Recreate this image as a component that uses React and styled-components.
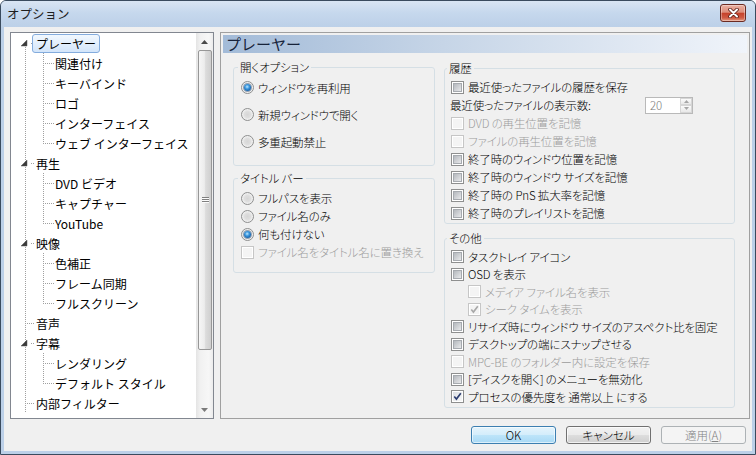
import React from 'react';
import styled, { createGlobalStyle, css } from 'styled-components';

const UI_FONT = `"Noto Sans CJK JP", "Noto Sans", "Liberation Sans", sans-serif`;

const GlobalStyle = createGlobalStyle`
  *, *::before, *::after { box-sizing: border-box; }
  html, body { margin: 0; padding: 0; width: 756px; height: 455px; overflow: hidden; background: #ffffff; }
  body { font-family: ${UI_FONT}; color: #000; }
`;

const Window = styled.div`
  width: 756px;
  height: 455px;
  display: flex;
  flex-direction: column;
  border: 1px solid #3a4b5e;
  border-radius: 6px 6px 0 0;
  background: #bcd0e8;
  overflow: hidden;
`;

const TitleBar = styled.div`
  flex: none;
  height: 26px;
  display: flex;
  justify-content: space-between;
  padding: 0 9px 0 6px;
  background: linear-gradient(#d9e5f3, #c6d8ed 45%, #bcd0e8);
`;

const TitleText = styled.span`
  align-self: center;
  font-size: 12.5px;
  line-height: 16px;
  color: #1e1e1e;
`;

const CloseButton = styled.div`
  align-self: flex-start;
  margin-top: 3px;
  width: 26px;
  height: 18px;
  border: 1px solid #6b2b22;
  border-radius: 3px;
  background: linear-gradient(#eab0a2 0%, #dd8e7b 45%, #c6422b 52%, #cf5a43 80%, #e59a80 100%);
  box-shadow: inset 0 0 0 1px rgba(255, 255, 255, 0.35);
  display: flex;
  align-items: center;
  justify-content: center;
`;

const Client = styled.div`
  flex: 1;
  margin: 0 3px 3px;
  display: flex;
  flex-direction: column;
  padding: 5px 2px 0 6px;
  background: #f0f0f0;
`;

const Body = styled.div`
  flex: none;
  height: 387px;
  display: flex;
  gap: 6px;
`;

/* ---------- tree ---------- */

const TreeBox = styled.div`
  flex: none;
  width: 204px;
  border: 1px solid #828790;
  background: #ffffff;
  display: flex;
`;

const TreeList = styled.div`
  flex: 1;
  min-width: 0;
  overflow: hidden;
`;

const TreeRow = styled.div`
  height: 20px;
  display: flex;
  align-items: center;
`;

const Gutter = styled.svg`
  flex: none;
  display: block;
`;

const TreeLabel = styled.span`
  height: 19px;
  margin-left: -4px;
  padding: 0 3px;
  border: 1px solid transparent;
  border-radius: 3px;
  font-size: 12px;
  line-height: 17px;
  white-space: nowrap;
  color: #000;
  ${(p) =>
    p.$selected &&
    css`
      border-color: #84acdd;
      background: linear-gradient(#f2f8fe, #d3e5fa);
    `}
`;

const ScrollBar = styled.div`
  flex: none;
  width: 17px;
  display: flex;
  flex-direction: column;
  background: linear-gradient(to right, #e4e4e4, #f1f1f1 25%, #f7f7f7 75%, #ececec);
`;

const ScrollButton = styled.div`
  flex: none;
  height: 17px;
  display: flex;
  align-items: center;
  justify-content: center;
`;

const Thumb = styled.div`
  flex: none;
  height: 300px;
  margin: 0 1px 0 2px;
  border: 1px solid #979797;
  border-radius: 2px;
  background: linear-gradient(to right, #f6f6f6, #ececec 45%, #dcdcdc 55%, #cfcfcf);
  display: flex;
  align-items: center;
  justify-content: center;
`;

const TrackRest = styled.div`
  flex: 1;
`;

/* ---------- panel ---------- */

const Panel = styled.section`
  flex: 1;
  min-width: 0;
  border: 1px solid #a0a0a0;
  padding: 2px;
  display: flex;
  flex-direction: column;
`;

const PanelHeader = styled.h1`
  margin: 0;
  height: 18px;
  padding-left: 3px;
  font-size: 15px;
  font-weight: normal;
  line-height: 18px;
  color: #17233a;
  background: linear-gradient(to right, #a3bbd8, #c6d5e7 42%, #f0f4fa);
`;

const Columns = styled.div`
  display: flex;
  align-items: flex-start;
  gap: 9px;
  padding: 7px 0 0 10px;
`;

const Column = styled.div`
  flex: none;
  width: ${(p) => p.$w}px;
  display: flex;
  flex-direction: column;
  gap: ${(p) => p.$gap}px;
  padding-top: ${(p) => p.$top || 0}px;
`;

const Group = styled.fieldset`
  margin: 0;
  min-width: 0;
  border: 1px solid #d5dfe5;
  border-radius: 3px;
  padding: ${(p) => p.$pad};
`;

const Legend = styled.legend`
  margin-left: ${(p) => p.$ml}px;
  padding: 0 2px;
  font-size: 11.5px;
  font-weight: 300;
  line-height: 14px;
  letter-spacing: -0.15px;
  font-feature-settings: "palt";
`;

const OptionRow = styled.div`
  display: flex;
  align-items: center;
  gap: 4px;
  height: ${(p) => p.$h}px;
  padding-left: ${(p) => p.$indent || 0}px;
  font-size: 11.5px;
  font-weight: 300;
  letter-spacing: -0.15px;
  font-feature-settings: "palt";
  white-space: nowrap;
  color: ${(p) => (p.$disabled ? '#9c9c9c' : '#000')};
`;

const PlainLabel = styled.span`
  margin-left: -1px;
`;

const Box = styled.span`
  flex: none;
  width: 13px;
  height: 13px;
  padding: 1px;
  display: flex;
  border: 1px solid ${(p) => (p.$disabled ? '#c6c6c6' : '#8e8f8f')};
  background: #ffffff;
`;

const BoxInner = styled.span`
  flex: 1;
  display: flex;
  align-items: center;
  justify-content: center;
  ${(p) =>
    p.$disabled
      ? css`
          background: #f4f4f4;
        `
      : p.$checked
      ? css`
          background: linear-gradient(135deg, #dde0e4, #f7f7f7);
        `
      : css`
          border: 1px solid #a6aaaf;
          background: linear-gradient(135deg, #b4b8bd, #e8e9eb);
        `}
`;

const CheckSvg = styled.svg`
  display: block;
  overflow: visible;
`;

const RadioOuter = styled.span`
  flex: none;
  width: 13px;
  height: 13px;
  border-radius: 50%;
  border: 1px solid #8e8f8f;
  background: radial-gradient(circle at 50% 50%, #d6d6d6 0%, #dedede 40%, #efefef 65%, #fbfbfb 100%);
  display: flex;
  align-items: center;
  justify-content: center;
`;

const RadioDot = styled.span`
  width: 7px;
  height: 7px;
  border-radius: 50%;
  background: radial-gradient(circle at 45% 40%, #bfe9ff 0%, #3f9ae0 35%, #135ea6 75%, #0c3f78 100%);
  box-shadow: 0 0 0 1px rgba(40, 70, 110, 0.45);
`;

const Spin = styled.div`
  flex: none;
  margin-left: auto;
  margin-right: 41px;
  width: 48px;
  height: 17px;
  display: flex;
  border: 1px solid #b9b9b9;
  background: #ffffff;
`;

const SpinValue = styled.span`
  flex: 1;
  padding-left: 4px;
  font-size: 11.5px;
  line-height: 15px;
  color: #7a7a7a;
`;

const SpinButtons = styled.div`
  flex: none;
  width: 12px;
  display: flex;
  flex-direction: column;
`;

const SpinButton = styled.span`
  flex: 1;
  border: 1px solid #d6d6d6;
  background: linear-gradient(#fbfbfb, #e8e8e8);
  display: flex;
  align-items: center;
  justify-content: center;
`;

/* ---------- footer ---------- */

const Footer = styled.div`
  display: flex;
  justify-content: flex-end;
  gap: 10px;
  margin-top: 7px;
  padding-right: 4px;
`;

const Button = styled.button`
  width: 85px;
  height: 18px;
  padding: 0;
  border-radius: 3px;
  font-family: ${UI_FONT};
  font-size: 11.5px;
  font-weight: 300;
  font-feature-settings: "palt";
  line-height: 16px;
  color: #000;
  ${(p) =>
    p.$variant === 'default'
      ? css`
          border: 1px solid #3c7fb1;
          background: linear-gradient(#e5f4fc 0%, #d4edfb 48%, #bde4f9 52%, #a8d9f5 100%);
          box-shadow: inset 0 0 0 1px rgba(255, 255, 255, 0.6);
        `
      : p.$variant === 'disabled'
      ? css`
          border: 1px solid #adb2b5;
          background: #f4f4f4;
          color: #838383;
        `
      : css`
          border: 1px solid #707070;
          background: linear-gradient(#f2f2f2 0%, #ebebeb 48%, #dddddd 52%, #cfcfcf 100%);
          box-shadow: inset 0 0 0 1px rgba(255, 255, 255, 0.7);
        `}
`;

/* ---------- data ---------- */

const treeItems = [
  { level: 0, text: 'プレーヤー', expanded: true, selected: true, first: true },
  { level: 1, text: '関連付け' },
  { level: 1, text: 'キーバインド' },
  { level: 1, text: 'ロゴ' },
  { level: 1, text: 'インターフェイス' },
  { level: 1, text: 'ウェブ インターフェイス', last: true },
  { level: 0, text: '再生', expanded: true },
  { level: 1, text: 'DVD ビデオ' },
  { level: 1, text: 'キャプチャー' },
  { level: 1, text: 'YouTube', last: true },
  { level: 0, text: '映像', expanded: true },
  { level: 1, text: '色補正' },
  { level: 1, text: 'フレーム同期' },
  { level: 1, text: 'フルスクリーン', last: true },
  { level: 0, text: '音声' },
  { level: 0, text: '字幕', expanded: true },
  { level: 1, text: 'レンダリング' },
  { level: 1, text: 'デフォルト スタイル', last: true },
  { level: 0, text: '内部フィルター' },
];

const historyItems = [
  { type: 'check', text: '最近使ったファイルの履歴を保存' },
  { type: 'spin', text: '最近使ったファイルの表示数:' },
  { type: 'check', text: 'DVD の再生位置を記憶', disabled: true },
  { type: 'check', text: 'ファイルの再生位置を記憶', disabled: true },
  { type: 'check', text: '終了時のウィンドウ位置を記憶' },
  { type: 'check', text: '終了時のウィンドウ サイズを記憶' },
  { type: 'check', text: '終了時の PnS 拡大率を記憶' },
  { type: 'check', text: '終了時のプレイリストを記憶' },
];

const otherItems = [
  { text: 'タスクトレイ アイコン' },
  { text: 'OSD を表示' },
  { text: 'メディア ファイル名を表示', disabled: true, indent: 17 },
  { text: 'シーク タイムを表示', disabled: true, checked: true, indent: 17 },
  { text: 'リサイズ時にウィンドウ サイズのアスペクト比を固定' },
  { text: 'デスクトップの端にスナップさせる' },
  { text: 'MPC-BE のフォルダー内に設定を保存', disabled: true },
  { text: '[ディスクを開く] のメニューを無効化' },
  { text: 'プロセスの優先度を 通常以上 にする', checked: true },
];

/* ---------- drawings ---------- */

const DOT = '#a0a0a0';

function VLine({ x, y1, y2 }) {
  return (
    <line x1={x + 0.5} x2={x + 0.5} y1={y1} y2={y2} stroke={DOT} strokeDasharray="1 1" shapeRendering="crispEdges" />
  );
}

function HLine({ y, x1, x2 }) {
  return (
    <line x1={x1} x2={x2} y1={y + 0.5} y2={y + 0.5} stroke={DOT} strokeDasharray="1 1" shapeRendering="crispEdges" />
  );
}

function RootGutter({ item }) {
  const isRoot = item.level === 0;
  return (
    <Gutter width={25} height={20}>
      <VLine x={14} y1={item.first ? 10 : 0} y2={20} />
      {isRoot && !item.expanded && <HLine y={10} x1={16} x2={24} />}
      {isRoot && item.expanded && (
        <>
          <HLine y={10} x1={20} x2={24} />
          <polygon points="16,7 16,13 10,13" fill="#3a3a3a" stroke="#5a5a5a" strokeWidth="0.5" />
        </>
      )}
    </Gutter>
  );
}

function ChildGutter({ item }) {
  return (
    <Gutter width={19} height={20}>
      <VLine x={7} y1={0} y2={item.last ? 11 : 20} />
      <HLine y={10} x1={9} x2={18} />
    </Gutter>
  );
}

function Tree() {
  return (
    <TreeBox>
      <TreeList>
        {treeItems.map((item) => (
          <TreeRow key={item.text}>
            <RootGutter item={item} />
            {item.level === 1 && <ChildGutter item={item} />}
            <TreeLabel $selected={item.selected}>{item.text}</TreeLabel>
          </TreeRow>
        ))}
      </TreeList>
      <ScrollBar>
        <ScrollButton>
          <svg width="7" height="4" viewBox="0 0 7 4">
            <polygon points="3.5,0 7,4 0,4" fill="#4a4a4a" />
          </svg>
        </ScrollButton>
        <Thumb>
          <svg width="7" height="7" viewBox="0 0 7 7">
            <g shapeRendering="crispEdges">
              <line x1="0" x2="7" y1="0.5" y2="0.5" stroke="#7f7f7f" />
              <line x1="0" x2="7" y1="1.5" y2="1.5" stroke="#fbfbfb" />
              <line x1="0" x2="7" y1="2.5" y2="2.5" stroke="#7f7f7f" />
              <line x1="0" x2="7" y1="3.5" y2="3.5" stroke="#fbfbfb" />
              <line x1="0" x2="7" y1="4.5" y2="4.5" stroke="#7f7f7f" />
              <line x1="0" x2="7" y1="5.5" y2="5.5" stroke="#fbfbfb" />
            </g>
          </svg>
        </Thumb>
        <TrackRest />
        <ScrollButton>
          <svg width="7" height="4" viewBox="0 0 7 4">
            <polygon points="0,0 7,0 3.5,4" fill="#7a7a7a" />
          </svg>
        </ScrollButton>
      </ScrollBar>
    </TreeBox>
  );
}

function CheckBox({ checked, disabled }) {
  return (
    <Box $disabled={disabled}>
      <BoxInner $checked={checked} $disabled={disabled}>
        {checked && (
          <CheckSvg width="9" height="9" viewBox="0 0 9 9">
            <path
              d="M1.3 4.6 L3.4 7.1 L7.8 1.2"
              fill="none"
              stroke={disabled ? '#a8a8a8' : '#2c3d70'}
              strokeWidth="1.6"
            />
          </CheckSvg>
        )}
      </BoxInner>
    </Box>
  );
}

function Radio({ checked }) {
  return <RadioOuter>{checked && <RadioDot />}</RadioOuter>;
}

function CheckOption({ text, checked, disabled, indent, h }) {
  return (
    <OptionRow $h={h} $disabled={disabled} $indent={indent}>
      <CheckBox checked={checked} disabled={disabled} />
      <span>{text}</span>
    </OptionRow>
  );
}

function RadioOption({ text, checked, h }) {
  return (
    <OptionRow $h={h}>
      <Radio checked={checked} />
      <span>{text}</span>
    </OptionRow>
  );
}

function Spinner({ value }) {
  return (
    <Spin>
      <SpinValue>{value}</SpinValue>
      <SpinButtons>
        <SpinButton>
          <svg width="5" height="3" viewBox="0 0 5 3">
            <polygon points="2.5,0 5,3 0,3" fill="#a6a6a6" />
          </svg>
        </SpinButton>
        <SpinButton>
          <svg width="5" height="3" viewBox="0 0 5 3">
            <polygon points="0,0 5,0 2.5,3" fill="#a6a6a6" />
          </svg>
        </SpinButton>
      </SpinButtons>
    </Spin>
  );
}

function CloseGlyph() {
  return (
    <svg width="11" height="10" viewBox="0 0 11 10">
      <path d="M2 1.5 L9 8.5 M9 1.5 L2 8.5" stroke="#5a1e16" strokeWidth="3.6" strokeLinecap="round" />
      <path d="M2 1.5 L9 8.5 M9 1.5 L2 8.5" stroke="#ffffff" strokeWidth="2" strokeLinecap="round" />
    </svg>
  );
}

export default function App() {
  return (
    <>
      <GlobalStyle />
      <Window>
        <TitleBar>
          <TitleText>オプション</TitleText>
          <CloseButton>
            <CloseGlyph />
          </CloseButton>
        </TitleBar>
        <Client>
          <Body>
            <Tree />
            <Panel>
              <PanelHeader>プレーヤー</PanelHeader>
              <Columns>
                <Column $w={202} $gap={5}>
                  <Group $pad="0 6px 10px 7px">
                    <Legend $ml={-3}>開くオプション</Legend>
                    <RadioOption h={27} checked text="ウィンドウを再利用" />
                    <RadioOption h={27} text="新規ウィンドウで開く" />
                    <RadioOption h={27} text="多重起動禁止" />
                  </Group>
                  <Group $pad="4px 6px 11px 7px">
                    <Legend $ml={-3}>タイトル バー</Legend>
                    <RadioOption h={18} text="フルパスを表示" />
                    <RadioOption h={18} text="ファイル名のみ" />
                    <RadioOption h={18} checked text="何も付けない" />
                    <CheckOption h={18} disabled text="ファイル名をタイトル名に置き換え" />
                  </Group>
                </Column>
                <Column $w={291} $gap={7} $top={1}>
                  <Group $pad="3px 0 1px 6px">
                    <Legend $ml={-4}>履歴</Legend>
                    {historyItems.map((it) =>
                      it.type === 'spin' ? (
                        <OptionRow key={it.text} $h={18}>
                          <PlainLabel>{it.text}</PlainLabel>
                          <Spinner value="20" />
                        </OptionRow>
                      ) : (
                        <CheckOption key={it.text} h={18} text={it.text} disabled={it.disabled} />
                      )
                    )}
                  </Group>
                  <Group $pad="3px 0 1.5px 6px">
                    <Legend $ml={-4}>その他</Legend>
                    {otherItems.map((it) => (
                      <CheckOption
                        key={it.text}
                        h={17.5}
                        text={it.text}
                        checked={it.checked}
                        disabled={it.disabled}
                        indent={it.indent}
                      />
                    ))}
                  </Group>
                </Column>
              </Columns>
            </Panel>
          </Body>
          <Footer>
            <Button $variant="default">OK</Button>
            <Button>キャンセル</Button>
            <Button $variant="disabled">
              適用(<u>A</u>)
            </Button>
          </Footer>
        </Client>
      </Window>
    </>
  );
}
